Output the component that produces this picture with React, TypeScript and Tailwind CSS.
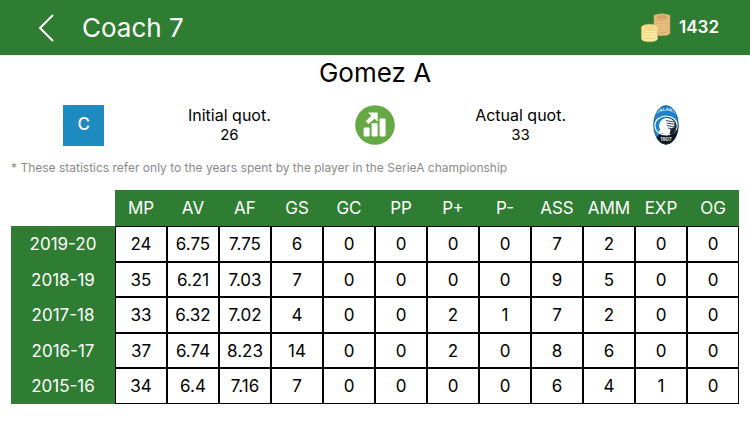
const columns = ["MP", "AV", "AF", "GS", "GC", "PP", "P+", "P-", "ASS", "AMM", "EXP", "OG"];

const seasons = [
  { year: "2019-20", values: ["24", "6.75", "7.75", "6", "0", "0", "0", "0", "7", "2", "0", "0"] },
  { year: "2018-19", values: ["35", "6.21", "7.03", "7", "0", "0", "0", "0", "9", "5", "0", "0"] },
  { year: "2017-18", values: ["33", "6.32", "7.02", "4", "0", "0", "2", "1", "7", "2", "0", "0"] },
  { year: "2016-17", values: ["37", "6.74", "8.23", "14", "0", "0", "2", "0", "8", "6", "0", "0"] },
  { year: "2015-16", values: ["34", "6.4", "7.16", "7", "0", "0", "0", "0", "6", "4", "1", "0"] },
];

function Stack({ x, top, bottom, fill, line, inner }: { x: number; top: number; bottom: number; fill: string; line: string; inner: string }) {
  const layers: number[] = [];
  for (let y = bottom; y > top; y -= 3) layers.push(y);
  return (
    <g stroke={line} strokeWidth="0.5">
      {layers.map((y) => (
        <path key={y} d={`M${x - 8} ${y - 3}v3a8 2.8 0 0 0 16 0v-3z`} fill={fill} />
      ))}
      <ellipse cx={x} cy={top} rx="8" ry="3.2" fill={fill} />
      <ellipse cx={x} cy={top} rx="5.4" ry="1.8" fill={inner} />
    </g>
  );
}

function Coins() {
  return (
    <svg width="30" height="30" viewBox="0 0 30 30" aria-hidden="true">
      <Stack x={21} top={4} bottom={20} fill="#e8c083" line="#cb9a5c" inner="#d3a567" />
      <Stack x={8.5} top={14.5} bottom={26} fill="#fdeca0" line="#dfbf70" inner="#f6dd86" />
    </svg>
  );
}

function GrowthIcon() {
  return (
    <svg width="40" height="40" viewBox="0 0 40 40" role="img" aria-label="Rising">
      <circle cx="20" cy="20" r="19.8" fill="#66a844" />
      <g fill="#fff">
        <rect x="8.6" y="22.6" width="6" height="8.8" rx="0.8" />
        <rect x="16.6" y="18.2" width="6" height="13.2" rx="0.8" />
        <rect x="24.6" y="13.4" width="6" height="18" rx="0.8" />
        <path d="M13 7.400h9.700v9.400l-3-3-6.400 5.200-2.600-2.700 5.600-5.500z" />
      </g>
    </svg>
  );
}

function Crest() {
  return (
    <svg width="26" height="40" viewBox="0 0 26 40" role="img" aria-label="Atalanta 1907">
      <defs>
        <clipPath id="crest">
          <ellipse cx="13" cy="20" rx="12.4" ry="19.4" />
        </clipPath>
        <path id="crest-top" d="M2 11.500A11.500 8 0 0 1 24 11.500" />
      </defs>
      <g clipPath="url(#crest)">
        <rect width="26" height="40" fill="#1683cf" />
        <path d="M26 19V40H3V33L8 28z" fill="#11161c" />
        <ellipse cx="13" cy="20.500" rx="11.200" ry="9.500" fill="#1683cf" stroke="#fff" strokeWidth="1.200" />
        <path d="M14 12.500c5 0 9.500 3.500 9.500 8.500s-3 8-6 9l-4-6z" fill="#18222b" />
        <path d="M6 22c0-5 3-9 7.500-9 3.500 0 6 1.500 8 4v5l-4 2-.5 4-3.500 2.500-4.500-2.500-4 .5 2-4z" fill="#fff" />
        <path d="M13 15.500l8 1.500M13.500 18l9 1.500M14 20.500l8 1.500M15 23l5 1" stroke="#26333d" strokeWidth="0.9" fill="none" />
        <text fontSize="4.200" fontWeight="600" fill="#fff" fontFamily="Inter, sans-serif">
          <textPath href="#crest-top" startOffset="50%" textAnchor="middle">ATALANTA</textPath>
        </text>
        <text x="13" y="36" fontSize="5" fontWeight="600" fill="#fff" textAnchor="middle" fontFamily="Inter, sans-serif">1907</text>
      </g>
      <ellipse cx="13" cy="20" rx="12.400" ry="19.400" fill="none" stroke="#17415f" strokeWidth="0.6" />
    </svg>
  );
}

function Quote({ label, value }: { label: string; value: string }) {
  return (
    <dl className="text-center text-base leading-[19px]">
      <dt>{label}</dt>
      <dd className="text-[15px] leading-[19px]">{value}</dd>
    </dl>
  );
}

export default function App() {
  return (
    <div className="bg-white font-['Inter',sans-serif] text-black">
      <header className="flex h-[55px] items-center bg-[#2e7d32] pr-[31px] pl-[38px] text-white">
        <button type="button" aria-label="Back" className="mr-7">
          <svg width="16" height="28" viewBox="0 0 16 28" fill="none" stroke="currentColor" strokeWidth="2" strokeLinecap="round" aria-hidden="true">
            <path d="M14.500 1.500 2 14 14.500 26.500" />
          </svg>
        </button>
        <h1 className="text-[26px] leading-8">Coach 7</h1>
        <div className="ml-auto flex items-center gap-2 text-[17px] font-semibold">
          <Coins />
          <span>1432</span>
        </div>
      </header>

      <main className="px-[11px]">
        <h2 className="pt-px text-center text-[26px] leading-[34px]">Gomez A</h2>

        <section className="grid h-[70px] grid-cols-5 items-center justify-items-center">
          <div className="flex size-[41px] items-center justify-center bg-[#1e8bc0] text-[17px] font-medium text-white">C</div>
          <Quote label="Initial quot." value="26" />
          <GrowthIcon />
          <Quote label="Actual quot." value="33" />
          <Crest />
        </section>

        <p className="text-xs leading-4 text-[#8a8a8a]">
          * These statistics refer only to the years spent by the player in the SerieA championship
        </p>

        <table className="mt-3.5 w-full table-fixed border-separate border-spacing-0 text-center text-[17px] leading-6">
          <colgroup>
            <col className="w-1/7" />
          </colgroup>
          <thead>
            <tr className="h-9">
              <td />
              {columns.map((name) => (
                <th key={name} scope="col" className="bg-[#2e7d32] p-0 font-normal text-white">
                  {name}
                </th>
              ))}
            </tr>
          </thead>
          <tbody>
            {seasons.map(({ year, values }) => (
              <tr key={year} className="h-9 even:h-[35px]">
                <th scope="row" className="bg-[#2e7d32] p-0 font-normal text-white">
                  {year}
                </th>
                {values.map((value, i) => (
                  <td key={columns[i]} className="border border-black p-0">
                    {value}
                  </td>
                ))}
              </tr>
            ))}
          </tbody>
        </table>
      </main>
    </div>
  );
}
